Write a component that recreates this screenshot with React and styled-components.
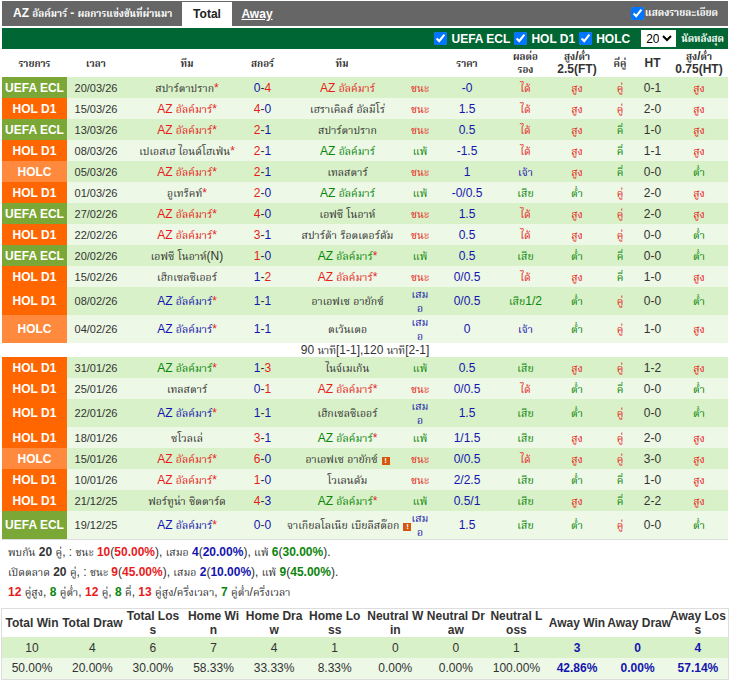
import React from "react";
import styled, { createGlobalStyle } from "styled-components";

const Global = createGlobalStyle`
  html, body { margin: 0; padding: 0; background: #fff; }
  body { font-family: "Liberation Sans", "Noto Serif Thai", sans-serif; font-size: 12px; color: #333; }
  select, input { font-family: "Liberation Sans", "Noto Serif Thai", sans-serif; }
`;

const RED = "#e81c1c";
const BLUE = "#1414b0";
const GREEN = "#0a860a";

const Page = styled.div`
  width: 730px;
  padding-top: 1px;
`;
const TitleBar = styled.div`
  display: flex;
  align-items: flex-end;
  height: 25px;
  margin: 0 2px;
  background: #666;
  color: #fff;
  font-weight: bold;
`;
const Title = styled.div`
  padding-left: 11px;
  width: 169px;
  line-height: 25px;
  white-space: nowrap;
`;
const Tab = styled.div`
  width: 50px;
  height: 24px;
  line-height: 24px;
  text-align: center;
  background: ${(p) => (p.$active ? "#fff" : "transparent")};
  color: ${(p) => (p.$active ? "#222" : "#fff")};
  text-decoration: ${(p) => (p.$active ? "none" : "underline")};
`;
const Detail = styled.label`
  margin-left: auto;
  margin-right: 10px;
  display: flex;
  align-items: center;
  height: 25px;
  white-space: nowrap;
`;
const Check = styled.input`
  width: 13px;
  height: 13px;
  margin: 0 1px 0 0;
`;
const GreenBar = styled.div`
  display: flex;
  justify-content: flex-end;
  align-items: center;
  gap: 4px;
  height: 21px;
  margin: 2px 2px 0;
  background: #006633;
  color: #fff;
  font-weight: bold;
  padding-right: 4px;
`;
const Thai = styled.span`
  font-size: 10.5px;
  th &, ${TitleBar} &, ${GreenBar} & {
    font-size: 9.7px;
  }
`;
const Filter = styled.label`
  display: flex;
  align-items: center;
  gap: 3px;
`;
const Count = styled.select`
  width: 35px;
  height: 17px;
  margin: 0 1px 0 7px;
  border: 1px solid #fff;
  background: #fff;
  font-size: 12px;
  padding: 0;
`;
const MatchTable = styled.table`
  width: 726px;
  margin: 0 2px;
  table-layout: fixed;
  border-collapse: collapse;
  border-bottom: 1px solid #ddd;
`;
const HeadCell = styled.th`
  height: 28px;
  padding: 0;
  font-weight: bold;
  font-size: 12px;
  line-height: 13px;
  color: #333;
  text-align: center;
`;
const Row = styled.tr`
  background: ${(p) => (p.$odd ? "#d9f1c8" : "#edf8e6")};
  height: ${(p) => (p.$tall ? 28 : 21)}px;
`;
const Cell = styled.td`
  padding: 0;
  text-align: center;
  line-height: 14px;
  white-space: nowrap;
  color: ${(p) => p.$c || "#333"};
  font-size: ${(p) => p.$size || 12}px;
`;
const Team2Cell = styled(Cell)`
  padding-left: 11px;
`;
const League = styled.td`
  padding: 0;
  text-align: center;
  font-weight: bold;
  color: #fff;
  background: ${(p) => p.$bg};
`;
const NoteRow = styled.tr`
  height: 14px;
  background: #fff;
`;
const NoteCell = styled.td`
  padding: 0;
  text-align: center;
  line-height: 14px;
`;
const Star = styled.span`
  color: ${RED};
`;
const Flag = styled.span`
  display: inline-block;
  width: 8px;
  height: 8px;
  margin-left: 4px;
  background: #d4570c;
  color: #fff;
  font-size: 8px;
  line-height: 8px;
  font-weight: bold;
  text-align: center;
`;
const Stats = styled.div`
  padding: 2px 0 0 8px;
  height: 66px;
`;
const StatLine = styled.div`
  height: 20px;
  line-height: 20px;
`;
const B = styled.b`
  color: ${(p) => p.$c || "#333"};
`;
const SumTable = styled.table`
  width: 728px;
  margin: 0 1px;
  table-layout: fixed;
  border-collapse: collapse;
  border: 1px solid #ddd;
`;
const SumHead = styled.th`
  height: 28px;
  padding: 0;
  font-size: 12px;
  line-height: 14px;
  color: #333;
  white-space: nowrap;
  text-align: center;
`;
const SumRow = styled.tr`
  height: ${(p) => p.$h}px;
  background: ${(p) => p.$bg};
`;
const SumCell = styled.td`
  padding: 0;
  text-align: center;
  font-weight: ${(p) => (p.$strong ? "bold" : "normal")};
  color: ${(p) => (p.$strong ? BLUE : "#333")};
`;

const LEAGUE = {
  E: { name: "UEFA ECL", bg: "#7ba736" },
  D: { name: "HOL D1", bg: "#ff6600" },
  C: { name: "HOLC", bg: "#ff8a3d" },
};
const AZ = "AZ อัลค์มาร์";
const AF = "อาเอฟเซ อายักซ์";
const D = [
  ["E","20/03/26","สปาร์ตาปราก",0,1,"0-4",AZ,"r",0,"ชนะ","-0","ได้","สูง","คู่","0-1","สูง"],
  ["D","15/03/26",AZ,"r",1,"4-0","เฮราเคิลส์ อัลมีโร่",0,0,"ชนะ","1.5","ได้","สูง","คู่","2-0","สูง"],
  ["E","13/03/26",AZ,"r",1,"2-1","สปาร์ตาปราก",0,0,"ชนะ","0.5","ได้","สูง","คี่","1-0","สูง"],
  ["D","08/03/26","เปเอสเฮ ไอนด์โฮเฟ่น",0,1,"2-1",AZ,"g",0,"แพ้","-1.5","ได้","สูง","คี่","1-1","สูง"],
  ["C","05/03/26",AZ,"r",1,"2-1","เทลสตาร์",0,0,"ชนะ","1","เจ้า","สูง","คี่","0-0","ต่ำ"],
  ["D","01/03/26","อูเทร็คท์",0,1,"2-0",AZ,"g",0,"แพ้","-0/0.5","เสีย","ต่ำ","คู่","2-0","สูง"],
  ["E","27/02/26",AZ,"r",1,"4-0","เอฟซี โนอาห์",0,0,"ชนะ","1.5","ได้","สูง","คู่","2-0","สูง"],
  ["D","22/02/26",AZ,"r",1,"3-1","สปาร์ต้า ร็อตเตอร์ดัม",0,0,"ชนะ","0.5","ได้","สูง","คู่","0-0","ต่ำ"],
  ["E","20/02/26","เอฟซี โนอาห์(N)",0,0,"1-0",AZ,"g",1,"แพ้","0.5","เสีย","ต่ำ","คี่","0-0","ต่ำ"],
  ["D","15/02/26","เฮ็กเซลซิเออร์",0,0,"1-2",AZ,"r",1,"ชนะ","0/0.5","ได้","สูง","คี่","1-0","สูง"],
  ["D","08/02/26",AZ,"b",1,"1-1",AF,0,0,"เสม|อ","0/0.5","เสีย1/2","ต่ำ","คู่","0-0","ต่ำ"],
  ["C","04/02/26",AZ,"b",1,"1-1","ตเว้นเตอ",0,0,"เสม|อ","0","เจ้า","ต่ำ","คู่","1-0","สูง"],
  "note",
  ["D","31/01/26",AZ,"g",1,"1-3","ไนจ์เมเก้น",0,0,"แพ้","0.5","เสีย","สูง","คู่","1-2","สูง"],
  ["D","25/01/26","เทลสตาร์",0,0,"0-1",AZ,"r",1,"ชนะ","0/0.5","ได้","ต่ำ","คี่","0-0","ต่ำ"],
  ["D","22/01/26",AZ,"b",1,"1-1","เฮ็กเซลซิเออร์",0,0,"เสม|อ","1.5","เสีย","ต่ำ","คู่","0-0","ต่ำ"],
  ["D","18/01/26","ซโวลเล่",0,0,"3-1",AZ,"g",1,"แพ้","1/1.5","เสีย","สูง","คู่","2-0","สูง"],
  ["C","15/01/26",AZ,"r",1,"6-0",AF,0,0,"ชนะ","0/0.5","ได้","สูง","คู่","3-0","สูง",1],
  ["D","10/01/26",AZ,"r",1,"1-0","โวเลนดัม",0,0,"ชนะ","2/2.5","เสีย","ต่ำ","คี่","1-0","สูง"],
  ["D","21/12/25","ฟอร์ทูน่า ซิตตาร์ด",0,0,"4-3",AZ,"g",1,"แพ้","0.5/1","เสีย","สูง","คี่","2-2","สูง"],
  ["E","19/12/25",AZ,"b",1,"0-0","จาเกียลโลเนีย เบียลีสต๊อก",0,0,"เสม|อ","1.5","เสีย","ต่ำ","คู่","0-0","ต่ำ",1],
];
const COLS = [65, 58, 124, 27, 132, 24, 70, 47, 56, 30, 35, 58];
const tone = { r: RED, b: BLUE, g: GREEN };
const word = (w) =>
  ({ ชนะ: RED, ได้: RED, สูง: RED, คู่: RED, แพ้: GREEN, เสีย: GREEN, "เสีย1/2": GREEN, ต่ำ: GREEN, คี่: GREEN, "เสม|อ": BLUE, เจ้า: BLUE }[w]);

const thaiRuns = (s) =>
  s.split(/([\u0E00-\u0E7F]+)/).map((p, i) =>
    /[\u0E00-\u0E7F]/.test(p) ? <Thai key={i}>{p}</Thai> : p
  );
// "|" marks where the reference's narrow column broke the line
const txt = (s) =>
  s.split("|").map((part, i) => (
    <React.Fragment key={i}>
      {i > 0 ? <br /> : null}
      {thaiRuns(part)}
    </React.Fragment>
  ));

function Score({ value }) {
  const [a, b] = value.split("-").map(Number);
  return (
    <>
      <span style={{ color: a > b ? RED : BLUE }}>{a}</span>-
      <span style={{ color: b > a ? RED : BLUE }}>{b}</span>
    </>
  );
}

const HEADS = ["รายการ", "เวลา", "ทีม", "สกอร์", "ทีม", "", "ราคา", "ผลต่อ|รอง", "สูง/ต่ำ|2.5(FT)", "คี่คู่", "HT", "สูง/ต่ำ|0.75(HT)"];

const SUM_HEADS = ["Total Win","Total Draw","Total Los|s","Home Wi|n","Home Dra|w","Home Lo|ss","Neutral W|in","Neutral Dr|aw","Neutral L|oss","Away Win","Away Draw","Away Los|s"];
const SUM_A = ["10","4","6","7","4","1","0","0","1","3","0","4"];
const SUM_B = ["50.00%","20.00%","30.00%","58.33%","33.33%","8.33%","0.00%","0.00%","100.00%","42.86%","0.00%","57.14%"];

export default function App() {
  let idx = 0;
  return (
    <Page>
      <Global />
      <TitleBar>
        <Title>{txt("AZ อัลค์มาร์ - ผลการแข่งขันที่ผ่านมา")}</Title>
        <Tab $active>Total</Tab>
        <Tab>Away</Tab>
        <Detail>
          <Check type="checkbox" defaultChecked />
          {txt("แสดงรายละเอียด")}
        </Detail>
      </TitleBar>
      <GreenBar>
        <Filter><Check type="checkbox" defaultChecked />UEFA ECL</Filter>
        <Filter><Check type="checkbox" defaultChecked />HOL D1</Filter>
        <Filter><Check type="checkbox" defaultChecked />HOLC</Filter>
        <Count defaultValue="20"><option>20</option></Count>
        <span>{txt("นัดหลังสุด")}</span>
      </GreenBar>
      <MatchTable>
        <colgroup>
          {COLS.map((w, i) => <col key={i} style={{ width: w }} />)}
        </colgroup>
        <thead>
          <tr>{HEADS.map((h, i) => <HeadCell key={i}>{txt(h)}</HeadCell>)}</tr>
        </thead>
        <tbody>
          {D.map((r, i) => {
            if (r === "note")
              return (
                <NoteRow key={i}>
                  <NoteCell colSpan={12}>{txt("90 นาที[1-1],120 นาที[2-1]")}</NoteCell>
                </NoteRow>
              );
            const odd = idx++ % 2 === 0;
            const l = LEAGUE[r[0]];
            return (
              <Row key={i} $odd={odd} $tall={r[9] === "เสม|อ"}>
                <League $bg={l.bg}>{l.name}</League>
                <Cell $size={11}>{r[1]}</Cell>
                <Cell $c={tone[r[3]]}>{txt(r[2])}{r[4] ? <Star>*</Star> : null}</Cell>
                <Cell><Score value={r[5]} /></Cell>
                <Team2Cell $c={tone[r[7]]}>
                  {txt(r[6])}{r[8] ? <Star>*</Star> : null}{r[16] ? <Flag>!</Flag> : null}
                </Team2Cell>
                <Cell $c={word(r[9])}>{txt(r[9])}</Cell>
                <Cell $c={BLUE}>{r[10]}</Cell>
                <Cell $c={word(r[11])}>{txt(r[11])}</Cell>
                <Cell $c={word(r[12])}>{txt(r[12])}</Cell>
                <Cell $c={word(r[13])}>{txt(r[13])}</Cell>
                <Cell>{r[14]}</Cell>
                <Cell $c={word(r[15])}>{txt(r[15])}</Cell>
              </Row>
            );
          })}
        </tbody>
      </MatchTable>
      <Stats>
        <StatLine>
          {txt("พบกัน ")}<B>20</B>{txt(" คู่, : ชนะ ")}<B $c={RED}>10</B>(<B $c={RED}>50.00%</B>){txt(", เสมอ ")}<B $c={BLUE}>4</B>(<B $c={BLUE}>20.00%</B>){txt(", แพ้ ")}<B $c={GREEN}>6</B>(<B $c={GREEN}>30.00%</B>).
        </StatLine>
        <StatLine>
          {txt("เปิดตลาด ")}<B>20</B>{txt(" คู่, : ชนะ ")}<B $c={RED}>9</B>(<B $c={RED}>45.00%</B>){txt(", เสมอ ")}<B $c={BLUE}>2</B>(<B $c={BLUE}>10.00%</B>){txt(", แพ้ ")}<B $c={GREEN}>9</B>(<B $c={GREEN}>45.00%</B>).
        </StatLine>
        <StatLine>
          <B $c={RED}>12</B>{txt(" คู่สูง, ")}<B $c={GREEN}>8</B>{txt(" คู่ต่ำ, ")}<B $c={RED}>12</B>{txt(" คู่, ")}<B $c={GREEN}>8</B>{txt(" คี่, ")}<B $c={RED}>13</B>{txt(" คู่สูง/ครึ่งเวลา, ")}<B $c={GREEN}>7</B>{txt(" คู่ต่ำ/ครึ่งเวลา")}
        </StatLine>
      </Stats>
      <SumTable>
        <thead>
          <tr>{SUM_HEADS.map((h) => <SumHead key={h}>{txt(h)}</SumHead>)}</tr>
        </thead>
        <tbody>
          <SumRow $h={21} $bg="#d9f1c8">
            {SUM_A.map((v, i) => <SumCell key={i} $strong={i > 8}>{v}</SumCell>)}
          </SumRow>
          <SumRow $h={21} $bg="#edf8e6">
            {SUM_B.map((v, i) => <SumCell key={i} $strong={i > 8}>{v}</SumCell>)}
          </SumRow>
        </tbody>
      </SumTable>
    </Page>
  );
}
